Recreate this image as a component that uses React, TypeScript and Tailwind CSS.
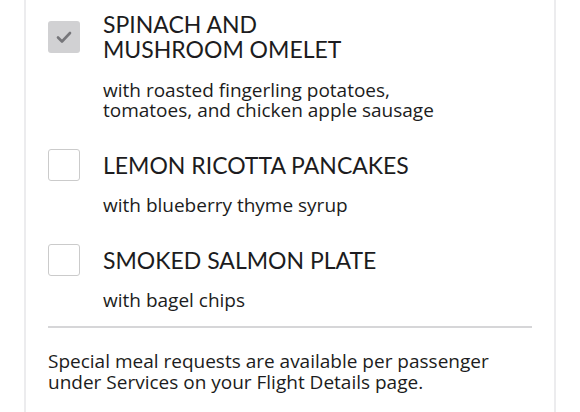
import React from 'react';

const meals = [
  {
    title: ['SPINACH AND', 'MUSHROOM OMELET'],
    desc: ['with roasted fingerling potatoes,', 'tomatoes, and chicken apple sausage'],
    checked: true,
  },
  { title: ['LEMON RICOTTA PANCAKES'], desc: ['with blueberry thyme syrup'], checked: false },
  { title: ['SMOKED SALMON PLATE'], desc: ['with bagel chips'], checked: false },
];

function Checkbox({ checked }: { checked: boolean }) {
  if (checked) {
    return (
      <div className="w-[32px] h-[32px] -my-[3.5px] shrink-0 rounded-[3px] bg-[#d1d1d3] flex items-center justify-center">
        <svg width="18" height="18" viewBox="0 0 18 18" fill="none" aria-hidden="true">
          <path d="M3 9.5 L7 13.5 L15 5" stroke="#76767a" strokeWidth="2.6" strokeLinecap="round" strokeLinejoin="round" />
        </svg>
      </div>
    );
  }
  return <div className="w-[32px] h-[32px] -my-[3.5px] shrink-0 rounded-[3px] border-[1.5px] border-[#cbcbcb] bg-white" />;
}

export default function App() {
  return (
    <div className="w-[580px] h-[412px] bg-white overflow-hidden text-[#1c1c20]">
      <div className="mx-[24px] h-full border-x-2 border-[#ececee] px-[22px] pt-[12px]">
        <ul className="flex flex-col gap-[32px]">
          {meals.map((meal, i) => (
            <li key={i}>
              <div className="flex items-center gap-[23px]">
                <Checkbox checked={meal.checked} />
                <div className="text-[23px] leading-[25px] font-['Lato',sans-serif]">
                  {meal.title.map((line) => (
                    <div key={line}>{line}</div>
                  ))}
                </div>
              </div>
              <div className="pl-[55px] mt-[17.5px] text-[19px] leading-[20.5px] font-['Open_Sans',sans-serif]">
                {meal.desc.map((line) => (
                  <div key={line}>{line}</div>
                ))}
              </div>
            </li>
          ))}
        </ul>
        <div className="mt-[15px] border-t-2 border-[#d6d6d8]" />
        <p className="mt-[23px] text-[19px] leading-[21.5px] font-['Open_Sans',sans-serif]">
          Special meal requests are available per passenger
          <br />
          under Services on your Flight Details page.
        </p>
      </div>
    </div>
  );
}
